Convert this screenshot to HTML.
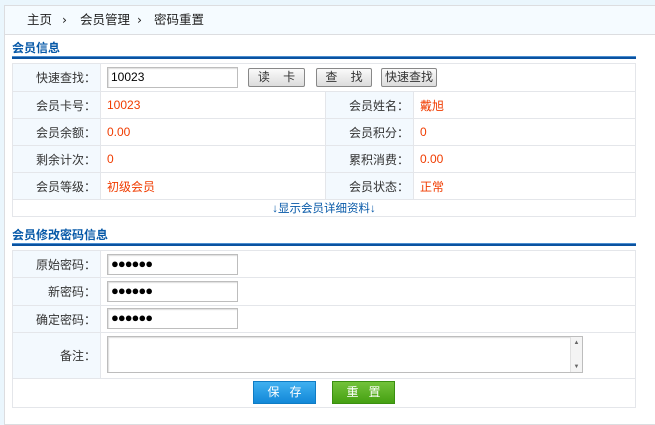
<!DOCTYPE html>
<html><head><meta charset="utf-8"><style>
*{margin:0;padding:0;box-sizing:border-box}
body{width:655px;height:413px;background:#eaf6fd;font:12px "Liberation Sans","Noto Sans CJK SC",sans-serif;color:#333;position:relative;overflow:hidden}
.a{position:absolute}
#main{left:4px;top:5px;width:660px;height:420px;background:#fff;border:1px solid #dcdde0}
#bc{left:5px;top:6px;width:660px;height:29px;background:#f5fbff;border-bottom:1px solid #dcdde0;font-size:12.5px;color:#222}
#bc span{top:6px;line-height:16px}
.h{color:#0759a8;font-weight:bold;font-size:12px}
.bar{background:#0a52a0;height:3px;border-top:1px solid #4b8ed0}
table{position:absolute;border-collapse:collapse;left:12px;width:624px}
td{border:1px solid #e4e6ea;padding:0 6px}
td.l{background:#f3f9fe;text-align:right;width:88px;padding-right:4px}
.r{color:#f03c00}
.in{position:absolute;border:1px solid #bdbdbd;background:#fff;box-shadow:inset 1px 1px 1px #ddd}
.btn{position:absolute;height:19px;border:1px solid #888;background:linear-gradient(#fafafa,#dcdcdc);font-size:12px;text-align:center;line-height:17px;border-radius:2px}
.dots{font-size:13px;letter-spacing:-1px;color:#000;padding-left:3px;line-height:18px}
</style></head><body>
<div id="main" class="a"></div>
<div id="bc" class="a"><span class="a" style="left:22px">主页</span><span class="a" style="left:57px;font-family:'DejaVu Sans'">›</span><span class="a" style="left:75px">会员管理</span><span class="a" style="left:132px;font-family:'DejaVu Sans'">›</span><span class="a" style="left:149px">密码重置</span></div>
<div class="a h" style="left:12px;top:39px">会员信息</div>
<div class="a bar" style="left:12px;top:56px;width:624px"></div>
<table style="top:63px">
<tr style="height:28px"><td class="l">快速查找：</td><td colspan="3"></td></tr>
<tr style="height:27px"><td class="l">会员卡号：</td><td class="r" style="width:225px">10023</td><td class="l" style="width:85px">会员姓名：</td><td class="r">戴旭</td></tr>
<tr style="height:27px"><td class="l">会员余额：</td><td class="r">0.00</td><td class="l">会员积分：</td><td class="r">0</td></tr>
<tr style="height:27px"><td class="l">剩余计次：</td><td class="r">0</td><td class="l">累积消费：</td><td class="r">0.00</td></tr>
<tr style="height:27px"><td class="l">会员等级：</td><td class="r">初级会员</td><td class="l">会员状态：</td><td class="r">正常</td></tr>
<tr style="height:17px"><td colspan="4" style="text-align:center;color:#0759a8;font-size:11.5px">↓显示会员详细资料↓</td></tr>
</table>
<div class="in" style="left:107px;top:67px;width:131px;height:21px;padding:2px 3px;color:#000">10023</div>
<div class="btn" style="left:248px;top:68px;width:57px">读&nbsp;&nbsp;&nbsp;&nbsp;卡</div>
<div class="btn" style="left:316px;top:68px;width:56px">查&nbsp;&nbsp;&nbsp;&nbsp;找</div>
<div class="btn" style="left:381px;top:68px;width:56px">快速查找</div>
<div class="a h" style="left:12px;top:226px">会员修改密码信息</div>
<div class="a bar" style="left:12px;top:243px;width:624px"></div>
<table style="top:250px">
<tr style="height:27px"><td class="l">原始密码：</td><td></td></tr>
<tr style="height:28px"><td class="l">新密码：</td><td></td></tr>
<tr style="height:27px"><td class="l">确定密码：</td><td></td></tr>
<tr style="height:46px"><td class="l">备注：</td><td></td></tr>
<tr style="height:29px"><td colspan="2"></td></tr>
</table>
<div class="in dots" style="left:107px;top:254px;width:131px;height:21px">●●●●●●</div>
<div class="in dots" style="left:107px;top:281px;width:131px;height:21px">●●●●●●</div>
<div class="in dots" style="left:107px;top:308px;width:131px;height:21px">●●●●●●</div>
<div class="in" style="left:107px;top:336px;width:476px;height:37px"><div class="a" style="right:0;top:0;width:12px;height:35px;background:#f4f4f4;border-left:1px solid #e0e0e0;font-size:6px;color:#666;text-align:center;line-height:12px">▲<br><br>▼</div></div>
<div class="a" style="left:253px;top:381px;width:63px;height:23px;background:linear-gradient(#3fb0f0,#1288d8);border:1px solid #0f7cc4;color:#fff;text-align:center;line-height:21px">保&nbsp;&nbsp;&nbsp;存</div>
<div class="a" style="left:332px;top:381px;width:63px;height:23px;background:linear-gradient(#72c23a,#45a012);border:1px solid #3a8f10;color:#fff;text-align:center;line-height:21px">重&nbsp;&nbsp;&nbsp;置</div>
</body></html>
